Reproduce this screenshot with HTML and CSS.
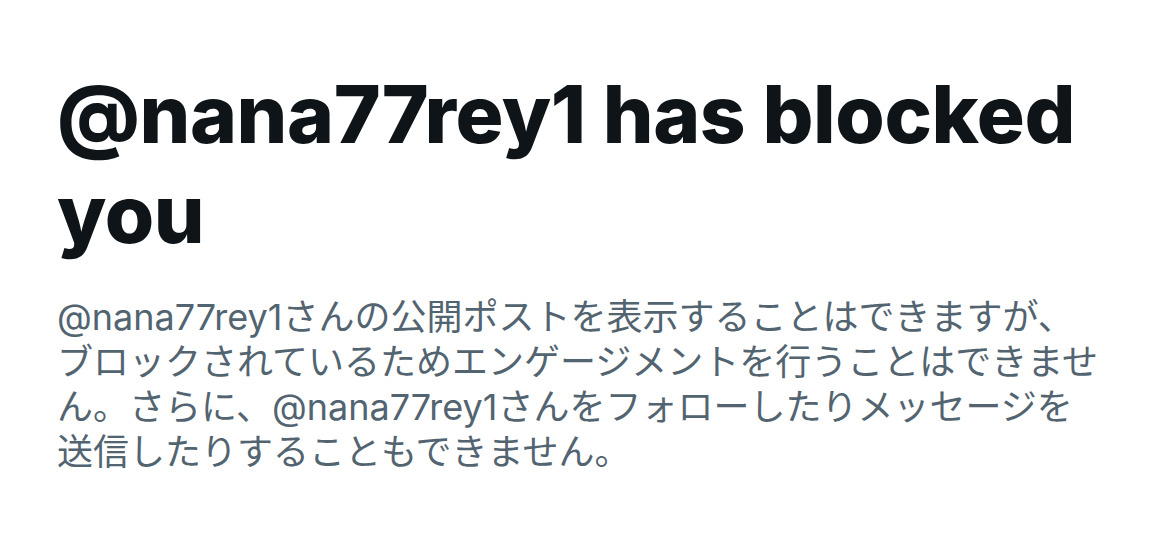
FILE: index.html
```html
<!DOCTYPE html>
<html lang="ja">
<head>
<meta charset="utf-8">
<link rel="stylesheet" href="styles.css">
</head>
<body>
<main class="notice">
  <h1 class="title">@nana77rey1 has blocked you</h1>
  <p class="desc">@nana77rey1さんの公開ポストを表示することはできますが、ブロックされているためエンゲージメントを行うことはできません。さらに、@nana77rey1さんをフォローしたりメッセージを送信したりすることもできません。</p>
</main>
</body>
</html>
```
FILE: styles.css
```css
html, body {
  margin: 0;
  padding: 0;
  background: #ffffff;
}
.notice {
  padding: 64px 0 0 57px;
  width: 1045px;
}
.title {
  margin: 0;
  font-family: "Inter", "Liberation Sans", sans-serif;
  font-weight: 800;
  font-size: 80px;
  line-height: 100px;
  letter-spacing: -0.4px;
  color: #0f1419;
}
.desc {
  margin: 31px 0 0 0;
  font-family: "Inter", "Noto Sans CJK JP", sans-serif;
  font-size: 36px;
  line-height: 45px;
  color: #536471;
}
```
